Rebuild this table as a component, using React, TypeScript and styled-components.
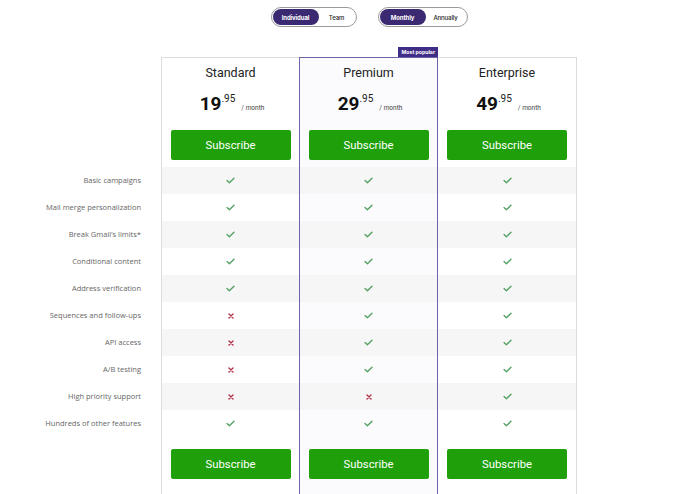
import React from "react";
import styled, { createGlobalStyle } from "styled-components";

const GlobalStyle = createGlobalStyle`
  html, body { margin: 0; padding: 0; background: #ffffff; }
  body { font-family: Roboto, "Liberation Sans", Arial, sans-serif; color: #222; }
  * { box-sizing: border-box; }
`;

const Page = styled.div`
  padding-top: 7px;
  width: 680px;
  height: 494px;
  overflow: hidden;
`;

const ToggleBar = styled.div`
  display: flex;
  justify-content: center;
  gap: 21px;
  width: 416px;
  margin-left: 161px;
`;

const Toggle = styled.div`
  display: flex;
  height: 20px;
  padding: 1px;
  border: 1px solid #9a9a9a;
  border-radius: 10px;
  background: #fff;
`;

const ToggleOption = styled.div<{ $active?: boolean; $w: number }>`
  width: ${(p) => p.$w}px;
  display: flex;
  align-items: center;
  justify-content: center;
  border-radius: 9px;
  font-family: Inter, "Open Sans", sans-serif;
  font-size: 6px;
  font-weight: ${(p) => (p.$active ? 700 : 500)};
  letter-spacing: -0.1px;
  color: ${(p) => (p.$active ? "#ffffff" : "#222")};
  background: ${(p) => (p.$active ? "#3b2a72" : "transparent")};
`;

const Table = styled.div`
  display: flex;
  margin-top: 30px;
`;

const LabelColumn = styled.div`
  width: 161px;
  padding-top: 110px;
`;

const LabelCell = styled.div`
  height: 27px;
  padding-right: 20px;
  padding-bottom: 2px;
  display: flex;
  align-items: center;
  justify-content: flex-end;
  font-family: "Open Sans", Roboto, sans-serif;
  font-size: 7.5px;
  font-weight: 400;
  color: #666;
`;

const PlanColumn = styled.div<{ $featured?: boolean; $w: number; $side: "left" | "right" | "both" }>`
  position: relative;
  width: ${(p) => p.$w}px;
  display: flex;
  flex-direction: column;
  background: ${(p) => (p.$featured ? "#fbfbfd" : "#fff")};
  border-top: 1px solid ${(p) => (p.$featured ? "#6f62a8" : "#dcdcdc")};
  border-left: ${(p) =>
    p.$side === "right" ? "none" : `1px solid ${p.$featured ? "#6f62a8" : "#dcdcdc"}`};
  border-right: ${(p) =>
    p.$side === "left" ? "none" : `1px solid ${p.$featured ? "#6f62a8" : "#dcdcdc"}`};
  height: 440px;
`;

const Badge = styled.div`
  position: absolute;
  top: -11px;
  right: -1px;
  height: 10px;
  padding: 0 3px;
  display: flex;
  align-items: center;
  background: #3f2d87;
  color: #fff;
  font-family: Inter, sans-serif;
  font-size: 5.2px;
  font-weight: 700;
`;

const PlanHeader = styled.div`
  height: 109px;
  display: flex;
  flex-direction: column;
  align-items: center;
`;

const PlanName = styled.div`
  margin-top: 6px;
  height: 18px;
  line-height: 18px;
  font-size: 12.5px;
  color: #222;
`;

const PriceRow = styled.div`
  margin-top: 10px;
  height: 24px;
  display: flex;
  align-items: baseline;
  padding-left: 3px;
`;

const PriceMain = styled.span`
  font-size: 19px;
  font-weight: 700;
  color: #111;
  line-height: 24px;
`;

const PriceCents = styled.span`
  font-size: 10px;
  color: #222;
  position: relative;
  top: -8px;
`;

const PriceUnit = styled.span`
  font-size: 6.5px;
  color: #444;
  margin-left: 6px;
`;

const SubscribeButton = styled.button`
  width: 120px;
  height: 30px;
  border: none;
  border-radius: 2px;
  background: #1fa00b;
  color: #fff;
  font-family: Roboto, sans-serif;
  font-size: 11.3px;
  cursor: pointer;
  padding: 0;
`;

const HeaderButton = styled(SubscribeButton)`
  margin-top: 14px;
`;

const FeatureCell = styled.div<{ $shaded: boolean }>`
  height: 27px;
  display: flex;
  align-items: center;
  justify-content: center;
  background: ${(p) => (p.$shaded ? "#f6f6f6" : "transparent")};
`;

const PlanFooter = styled.div`
  padding-top: 12px;
  display: flex;
  justify-content: center;
`;

const Check = () => (
  <svg width="9" height="7" viewBox="0 0 9 7">
    <path d="M1 3.6 L3.4 5.8 L8 1.2" fill="none" stroke="#55a265" strokeWidth="1.4" strokeLinecap="round" strokeLinejoin="round" />
  </svg>
);

const Cross = () => (
  <svg width="6" height="6" viewBox="0 0 6 6">
    <path d="M1 1 L5 5 M5 1 L1 5" fill="none" stroke="#b2344b" strokeWidth="1.4" strokeLinecap="round" />
  </svg>
);

const features = [
  "Basic campaigns",
  "Mail merge personalization",
  "Break Gmail’s limits*",
  "Conditional content",
  "Address verification",
  "Sequences and follow-ups",
  "API access",
  "A/B testing",
  "High priority support",
  "Hundreds of other features",
];

type Plan = {
  name: string;
  price: string;
  featured?: boolean;
  side: "left" | "right" | "both";
  w: number;
  has: boolean[];
};

const plans: Plan[] = [
  {
    name: "Standard",
    price: "19",
    side: "left",
    w: 138,
    has: [true, true, true, true, true, false, false, false, false, true],
  },
  {
    name: "Premium",
    price: "29",
    featured: true,
    side: "both",
    w: 139,
    has: [true, true, true, true, true, true, true, true, false, true],
  },
  {
    name: "Enterprise",
    price: "49",
    side: "right",
    w: 139,
    has: [true, true, true, true, true, true, true, true, true, true],
  },
];

export default function App() {
  return (
    <>
      <GlobalStyle />
      <Page>
        <ToggleBar>
          <Toggle>
            <ToggleOption $active $w={46}>Individual</ToggleOption>
            <ToggleOption $w={36}>Team</ToggleOption>
          </Toggle>
          <Toggle>
            <ToggleOption $active $w={46}>Monthly</ToggleOption>
            <ToggleOption $w={40}>Annually</ToggleOption>
          </Toggle>
        </ToggleBar>
        <Table>
          <LabelColumn>
            {features.map((f) => (
              <LabelCell key={f}>{f}</LabelCell>
            ))}
          </LabelColumn>
          {plans.map((p) => (
            <PlanColumn key={p.name} $featured={p.featured} $w={p.w} $side={p.side}>
              {p.featured && <Badge>Most popular</Badge>}
              <PlanHeader>
                <PlanName>{p.name}</PlanName>
                <PriceRow>
                  <PriceMain>{p.price}</PriceMain>
                  <PriceCents>.95</PriceCents>
                  <PriceUnit>/ month</PriceUnit>
                </PriceRow>
                <HeaderButton>Subscribe</HeaderButton>
              </PlanHeader>
              {p.has.map((h, i) => (
                <FeatureCell key={i} $shaded={i % 2 === 0}>
                  {h ? <Check /> : <Cross />}
                </FeatureCell>
              ))}
              <PlanFooter>
                <SubscribeButton>Subscribe</SubscribeButton>
              </PlanFooter>
            </PlanColumn>
          ))}
        </Table>
      </Page>
    </>
  );
}
